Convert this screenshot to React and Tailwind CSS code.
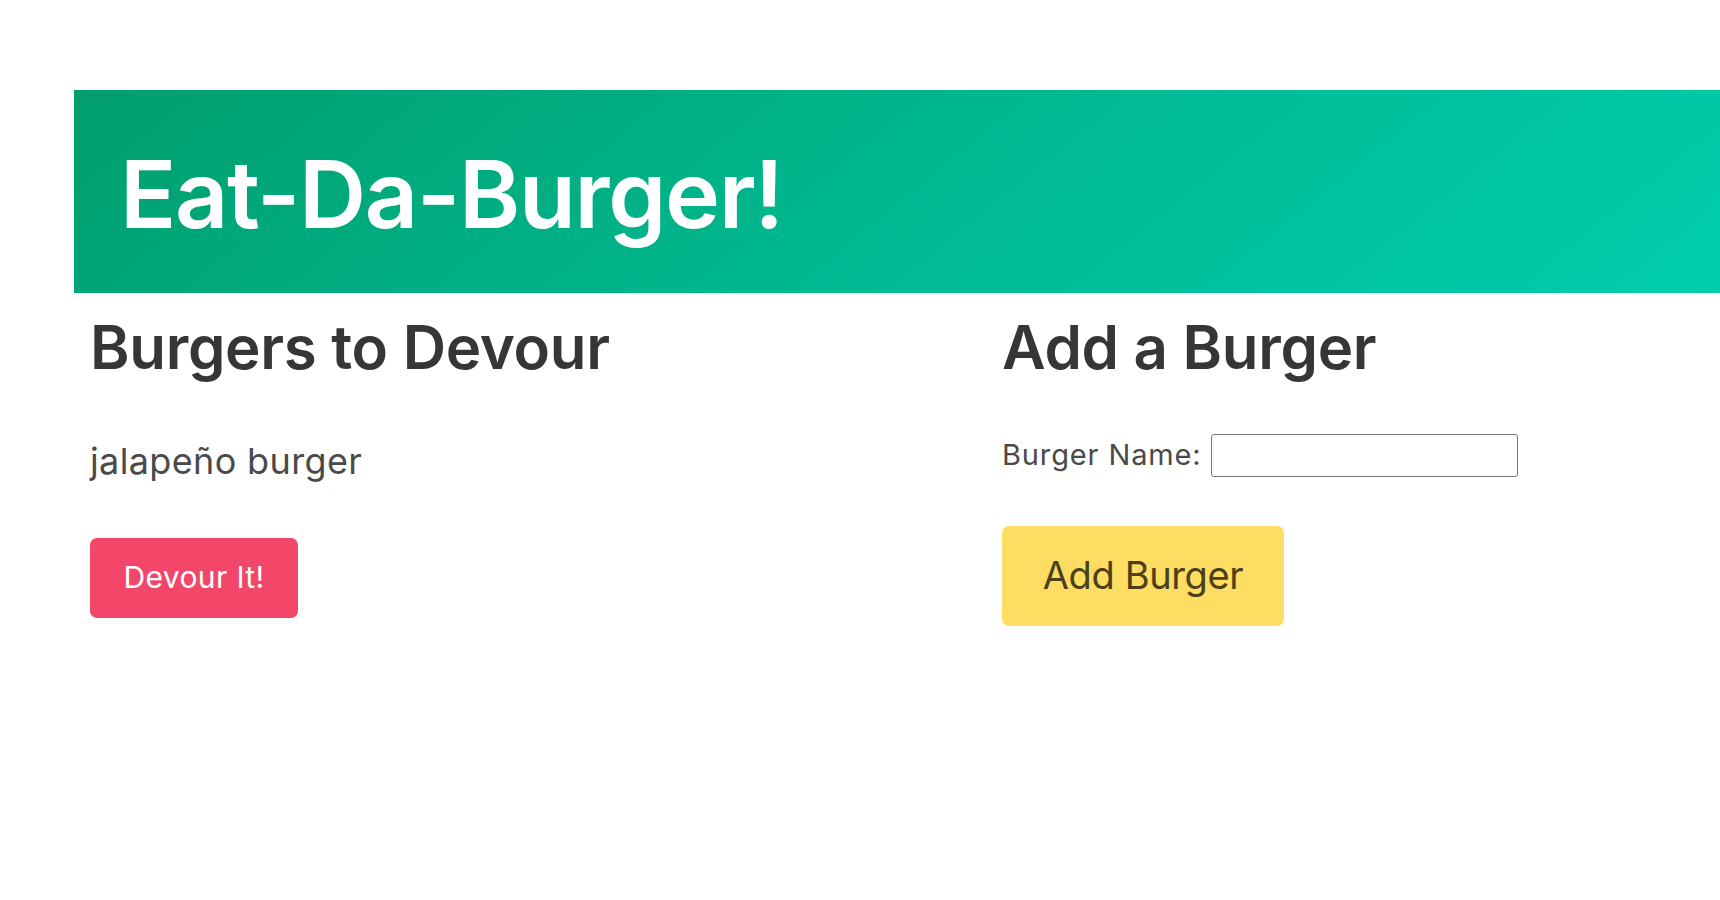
import React, { useState } from 'react';

const burgers = [{ id: 1, name: 'jalapeño burger' }];

const App = () => {
  const [name, setName] = useState('');

  return (
    <div className="min-h-screen bg-white font-['Inter','Liberation_Sans',sans-serif] text-[#4a4a4a]">
      <div className="pt-[90px] pl-[74px]">
        {/* Hero */}
        <section className="h-[203px] flex items-center pl-[46px] pt-[5px] bg-[linear-gradient(141deg,#009e6c_0%,#00b890_50%,#00cdae_100%)]">
          <h1 className="text-[93px] leading-none font-semibold tracking-[-0.014em] text-white">Eat-Da-Burger!</h1>
        </section>

        <div className="flex">
          {/* Left column */}
          <div className="w-[912px] pl-4">
            <h2 className="mt-[21px] text-[60px] leading-[1.125] font-semibold tracking-[-0.005em] text-[#363636]">Burgers to Devour</h2>
            {burgers.map((b) => (
              <div key={b.id}>
                <p className="mt-[52px] text-[36px] leading-[1.5] tracking-[0.01em]">{b.name}</p>
                <button className="mt-[50px] w-[208px] h-[80px] rounded-[7px] bg-[#f3476a] text-white text-[30px] tracking-[0.012em]">
                  Devour It!
                </button>
              </div>
            ))}
          </div>

          {/* Right column */}
          <div className="pl-4">
            <h2 className="mt-[21px] text-[60px] leading-[1.125] font-semibold tracking-[-0.005em] text-[#363636]">Add a Burger</h2>
            <div className="mt-[52px] flex items-center h-[43px]">
              <label className="text-[29px] tracking-[0.03em] mr-[9px]">Burger Name:</label>
              <input
                value={name}
                onChange={(e) => setName(e.target.value)}
                className="w-[307px] h-[43px] border-[1.5px] border-[#767676] rounded-[3px] bg-white px-2 text-[24px]"
              />
            </div>
            <button className="mt-[49px] w-[282px] h-[100px] rounded-[7px] bg-[#ffdc62] text-[#4b4119] text-[38px] tracking-[-0.01em]">
              Add Burger
            </button>
          </div>
        </div>
      </div>
    </div>
  );
};

export default App;
